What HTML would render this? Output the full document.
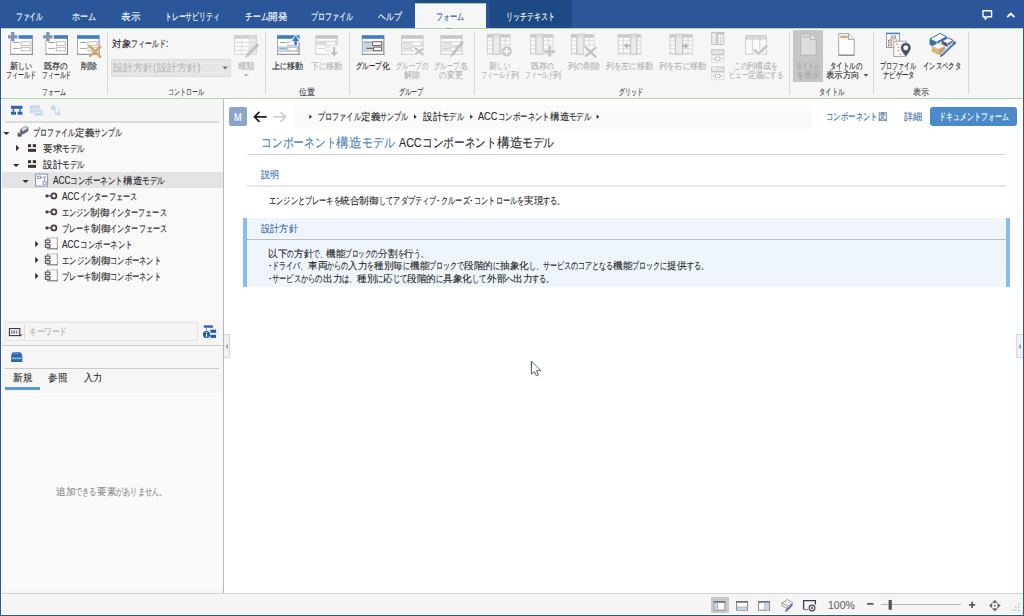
<!DOCTYPE html>
<html lang="ja"><head><meta charset="utf-8"><title>Next Design</title>
<style>
html,body{margin:0;padding:0;}
body{width:1024px;height:616px;overflow:hidden;position:relative;background:#fff;font-family:"Liberation Sans",sans-serif;font-size:9.6px;color:#262626;}
.b{position:absolute;}
.t{position:absolute;-webkit-text-stroke:0.12px currentColor;white-space:nowrap;transform-origin:0 50%;display:block;}
svg{position:absolute;overflow:visible;}
</style></head><body>
<!-- window frame + top bar -->
<div class="b" style="left:0;top:0;width:1024px;height:616px;background:#2b579a"></div>
<div class="b" style="left:1px;top:29px;width:1021.65px;height:585.8px;background:#fff"></div>
<!-- contextual tab shading -->
<div class="b" style="left:414.6px;top:0;width:74px;height:3.4px;background:#1f4b86"></div>
<div class="b" style="left:488.6px;top:0;width:83.6px;height:28px;background:#1d4a84"></div>
<div class="b" style="left:414.6px;top:3px;width:71.2px;height:26px;background:#f6f6f7;border-top:1px solid #9fd39c;box-sizing:border-box"></div>
<!-- ribbon body -->
<div class="b" style="left:2px;top:30px;width:1020.65px;height:68px;background:#f6f6f7"></div>
<div class="b" style="left:1px;top:28px;width:1021.65px;height:1px;background:#a9d7a5"></div>
<div class="b" style="left:446px;top:28px;width:6px;height:1px;background:#a79aa8"></div>
<div class="b" style="left:1px;top:98px;width:1021.65px;height:1px;background:#a9d7a5"></div>
<!-- left panel -->
<div class="b" style="left:2px;top:99px;width:221px;height:494px;background:#f6f6f6"></div>
<div class="b" style="left:2px;top:99px;width:221px;height:23px;background:#f5f5f5"></div>
<div class="b" style="left:2px;top:123px;width:221px;height:197px;background:#f9f9f9"></div>
<div class="b" style="left:223px;top:99px;width:1px;height:494px;background:#b9b9b9"></div>
<div class="b" style="left:5px;top:121.3px;width:214px;height:1.5px;background:#dadcdc"></div>
<div class="b" style="left:2px;top:172px;width:221px;height:16px;background:#e4e4e4"></div>
<div class="b" style="left:2px;top:320px;width:221px;height:25px;background:#f5f5f5"></div>
<div class="b" style="left:5px;top:322px;width:193px;height:19px;background:#f5f5f5;border:1px solid #e4e4e4;box-sizing:border-box"></div>
<div class="b" style="left:24px;top:324px;width:1px;height:15px;background:#dcdcdc"></div>
<div class="b" style="left:2px;top:345px;width:221px;height:1px;background:#cfcfcf"></div>
<div class="b" style="left:5px;top:368px;width:214px;height:1px;background:#cbcbcb"></div>
<div class="b" style="left:5px;top:387px;width:35px;height:3px;background:#5b9bd5"></div>
<div class="b" style="left:4px;top:392.5px;width:219px;height:197.5px;background:#fafafa"></div>
<!-- splitter handles -->
<div class="b" style="left:224px;top:334px;width:6px;height:24px;background:#eef2f4;border:1px solid #d6d6d6;border-left:none;box-sizing:border-box"></div>
<div class="b" style="left:1016px;top:334px;width:6.65px;height:24px;background:#eef2f4;border:1px solid #d6d6d6;border-right:none;box-sizing:border-box"></div>
<!-- main content -->
<div class="b" style="left:229px;top:107px;width:18px;height:19px;background:#8aa5c9;border-radius:2px"></div>
<div class="b" style="left:294px;top:105px;width:518px;height:24px;background:#fafafa;border-radius:4px"></div>
<div class="b" style="left:930px;top:107px;width:87px;height:19px;background:#4b8ac9;border-radius:3px"></div>
<div class="b" style="left:247px;top:154px;width:759px;height:1px;background:#d4d4d4"></div>
<div class="b" style="left:247px;top:185px;width:759px;height:2px;background:#e6e6e6"></div>
<div class="b" style="left:243px;top:218px;width:767px;height:69px;background:#eef6fb"></div>
<div class="b" style="left:243px;top:218px;width:4px;height:69px;background:#88bbf0"></div>
<div class="b" style="left:1006px;top:218px;width:4px;height:69px;background:#88bbf0"></div>
<div class="b" style="left:247px;top:239px;width:759px;height:1px;background:#bdbdbd"></div>
<!-- status bar -->
<div class="b" style="left:2px;top:593px;width:1020.65px;height:1px;background:#d2d2d2"></div>
<div class="b" style="left:2px;top:594px;width:1020.65px;height:19.8px;background:#f5f5f5"></div>
<div class="b" style="left:711px;top:597px;width:18px;height:16px;background:#c9c9c9"></div>
<!-- ribbon misc -->
<div class="b" style="left:111px;top:59px;width:120px;height:18px;background:#e6e6e6;border:1px solid #dcdcdc;box-sizing:border-box"></div>
<div class="b" style="left:793px;top:30px;width:30px;height:52px;background:#c6c6c6"></div>
<svg width="1024" height="616" viewBox="0 0 1024 616" style="left:0;top:0"><rect x="107" y="31.5" width="1" height="63" fill="#d7d7d7" /><rect x="265" y="31.5" width="1" height="63" fill="#d7d7d7" /><rect x="349" y="31.5" width="1" height="63" fill="#d7d7d7" /><rect x="474" y="31.5" width="1" height="63" fill="#d7d7d7" /><rect x="789" y="31.5" width="1" height="63" fill="#d7d7d7" /><rect x="873" y="31.5" width="1" height="63" fill="#d7d7d7" /><rect x="968" y="31.5" width="1" height="63" fill="#d7d7d7" /><rect x="10.2" y="35.2" width="22.6" height="19.6" fill="#ffffff" /><rect x="18.6" y="35.2" width="14.2" height="3.6" fill="#3f7dc0" /><line x1="10.7" y1="38.8" x2="10.7" y2="54.8" stroke="#a9a9ab" stroke-width="1" /><line x1="32.3" y1="38.8" x2="32.3" y2="54.8" stroke="#8a7e7c" stroke-width="1" /><line x1="10.2" y1="54.3" x2="32.8" y2="54.3" stroke="#857a7a" stroke-width="1" /><line x1="13.1" y1="42.5" x2="19.8" y2="42.5" stroke="#a7a2a0" stroke-width="1" /><line x1="13.1" y1="48.4" x2="19.8" y2="48.4" stroke="#a7a2a0" stroke-width="1" /><rect x="21.1" y="41.8" width="9.2" height="3.6" fill="#fff" stroke="#bcb8b6" stroke-width="0.9"/><rect x="21.1" y="47.3" width="9.2" height="3.5" fill="#fff" stroke="#bcb8b6" stroke-width="0.9"/><rect x="7.4" y="34.6" width="10.6" height="4.4" fill="#f6f6f7" /><rect x="10.4" y="31.4" width="4.6" height="10.6" fill="#f6f6f7" /><rect x="8" y="35.2" width="9.4" height="3.3" fill="#7e98b3" /><rect x="11" y="32" width="3.4" height="9.4" fill="#7e98b3" /><rect x="45.4" y="35.2" width="22.6" height="19.6" fill="#ffffff" /><rect x="53.8" y="35.2" width="14.2" height="3.6" fill="#3f7dc0" /><line x1="45.9" y1="38.8" x2="45.9" y2="54.8" stroke="#a9a9ab" stroke-width="1" /><line x1="67.5" y1="38.8" x2="67.5" y2="54.8" stroke="#8a7e7c" stroke-width="1" /><line x1="45.4" y1="54.3" x2="68" y2="54.3" stroke="#857a7a" stroke-width="1" /><line x1="48.3" y1="42.5" x2="55" y2="42.5" stroke="#a7a2a0" stroke-width="1" /><line x1="48.3" y1="48.4" x2="55" y2="48.4" stroke="#a7a2a0" stroke-width="1" /><rect x="56.3" y="41.8" width="9.2" height="3.6" fill="#fff" stroke="#bcb8b6" stroke-width="0.9"/><rect x="56.3" y="47.3" width="9.2" height="3.5" fill="#fff" stroke="#bcb8b6" stroke-width="0.9"/><rect x="42.6" y="34.6" width="10.6" height="4.4" fill="#f6f6f7" /><rect x="45.6" y="31.4" width="4.6" height="10.6" fill="#f6f6f7" /><rect x="43.2" y="35.2" width="9.4" height="3.3" fill="#7e98b3" /><rect x="46.2" y="32" width="3.4" height="9.4" fill="#7e98b3" /><rect x="77" y="35.2" width="22.6" height="19.6" fill="#ffffff" /><rect x="77" y="35.2" width="22.6" height="3.6" fill="#3f7dc0" /><line x1="77.5" y1="38.8" x2="77.5" y2="54.8" stroke="#a9a9ab" stroke-width="1" /><line x1="99.1" y1="38.8" x2="99.1" y2="54.8" stroke="#8a7e7c" stroke-width="1" /><line x1="77" y1="54.3" x2="99.6" y2="54.3" stroke="#857a7a" stroke-width="1" /><line x1="79.9" y1="42.5" x2="86.6" y2="42.5" stroke="#a7a2a0" stroke-width="1" /><line x1="79.9" y1="48.4" x2="86.6" y2="48.4" stroke="#a7a2a0" stroke-width="1" /><rect x="87.9" y="41.8" width="9.2" height="3.6" fill="#fff" stroke="#bcb8b6" stroke-width="0.9"/><rect x="87.9" y="47.3" width="9.2" height="3.5" fill="#fff" stroke="#bcb8b6" stroke-width="0.9"/><line x1="89.6" y1="46" x2="100.2" y2="56.8" stroke="#d3a96c" stroke-width="2.6" stroke-linecap="round"/><line x1="100.2" y1="47" x2="90.1" y2="55.8" stroke="#d3a96c" stroke-width="2.6" stroke-linecap="round"/><path d="M222.6,66.6 h5.2 l-2.6,3 z" fill="#6e6e6e" stroke="none" stroke-width="1" /><path d="M243.6,74 h5 l-2.5,2.8 z" fill="#b4b4b4" stroke="none" stroke-width="1" /><rect x="234.2" y="35.1" width="22.6" height="19.6" fill="#fbfbfb" /><rect x="249.4" y="38.6" width="7.4" height="16.1" fill="#e9e9e9" /><rect x="234.2" y="35.1" width="22.6" height="3.6" fill="#cfcfcf" /><rect x="249.6" y="35.9" width="6.2" height="2" fill="#dedede" /><line x1="234.2" y1="42.5" x2="256.8" y2="42.5" stroke="#d8d8d8" stroke-width="0.9" /><line x1="234.2" y1="46.4" x2="256.8" y2="46.4" stroke="#d8d8d8" stroke-width="0.9" /><line x1="234.2" y1="50.3" x2="256.8" y2="50.3" stroke="#d8d8d8" stroke-width="0.9" /><line x1="241.6" y1="38.7" x2="241.6" y2="54.7" stroke="#dcdcdc" stroke-width="0.9" /><line x1="249.2" y1="38.7" x2="249.2" y2="54.7" stroke="#dcdcdc" stroke-width="0.9" /><rect x="234.65" y="35.55" width="21.7" height="18.7" fill="none" stroke="#d0d0d0" stroke-width="0.9"/><line x1="258" y1="44.4" x2="247.2" y2="55.4" stroke="#c2c2c2" stroke-width="3.2" /><path d="M246.2,54 l2.4,2.4 l-3.6,1.4 z" fill="#c9c9c9" stroke="none" stroke-width="1" /><rect x="277" y="35.2" width="22.6" height="19.6" fill="#ffffff" /><rect x="277.6" y="46.2" width="21.4" height="5.8" fill="#b7d9f1" /><rect x="277" y="35.2" width="22.6" height="3.6" fill="#3f7dc0" /><line x1="277.5" y1="38.8" x2="277.5" y2="54.8" stroke="#a9a9ab" stroke-width="1" /><line x1="299.1" y1="38.8" x2="299.1" y2="54.8" stroke="#8a7e7c" stroke-width="1" /><line x1="277" y1="54.3" x2="299.6" y2="54.3" stroke="#857a7a" stroke-width="1" /><line x1="279.9" y1="42.5" x2="286.6" y2="42.5" stroke="#a7a2a0" stroke-width="1" /><line x1="279.9" y1="48.4" x2="286.6" y2="48.4" stroke="#a7a2a0" stroke-width="1" /><rect x="287.9" y="41.8" width="9.2" height="3.6" fill="#fff" stroke="#bcb8b6" stroke-width="0.9"/><rect x="287.9" y="47.3" width="9.2" height="3.5" fill="#fff" stroke="#bcb8b6" stroke-width="0.9"/><path d="M295.6,34.4 l4.6,6.2 v1.2 h-2.6 v4 h-4 v-4 h-2.6 v-1.2 z" fill="#ffffff" stroke="none" stroke-width="1" /><path d="M295.6,35.4 l3.6,5.6 h-2.3 v4.4 h-2.6 v-4.4 h-2.3 z" fill="#3f7dc0" stroke="none" stroke-width="1" /><rect x="315.2" y="35.2" width="22.6" height="19.6" fill="#fbfbfb" /><rect x="315.8" y="40.6" width="21.4" height="4.9" fill="#e2e2e2" /><rect x="315.2" y="35.2" width="22.6" height="3.6" fill="#c6c6c6" /><line x1="315.7" y1="38.8" x2="315.7" y2="54.8" stroke="#d2d2d2" stroke-width="1" /><line x1="337.3" y1="38.8" x2="337.3" y2="54.8" stroke="#cecece" stroke-width="1" /><line x1="315.2" y1="54.3" x2="337.8" y2="54.3" stroke="#cbcbcb" stroke-width="1" /><line x1="318.1" y1="42.5" x2="324.8" y2="42.5" stroke="#d0d0d0" stroke-width="1" /><line x1="318.1" y1="48.4" x2="324.8" y2="48.4" stroke="#d0d0d0" stroke-width="1" /><rect x="326.1" y="41.8" width="9.2" height="3.6" fill="#fdfdfd" stroke="#d6d6d6" stroke-width="0.9"/><rect x="326.1" y="47.3" width="9.2" height="3.5" fill="#fdfdfd" stroke="#d6d6d6" stroke-width="0.9"/><rect x="330" y="45.6" width="8.4" height="11" fill="#f6f6f7" /><path d="M333,47 h2.2 v5 h2.8 l-3.9,4.6 l-3.9,-4.6 h2.8 z" fill="#c1c1c1" stroke="none" stroke-width="1" /><rect x="361.8" y="35.2" width="22.6" height="19.6" fill="#ffffff" /><rect x="362.4" y="41" width="21.4" height="10.9" fill="#c4d5e6" /><rect x="361.8" y="35.2" width="22.6" height="3.6" fill="#3f7dc0" /><line x1="362.3" y1="38.8" x2="362.3" y2="54.8" stroke="#a9a9ab" stroke-width="1" /><line x1="383.9" y1="38.8" x2="383.9" y2="54.8" stroke="#8a7e7c" stroke-width="1" /><line x1="361.8" y1="54.3" x2="384.4" y2="54.3" stroke="#857a7a" stroke-width="1" /><line x1="364.2" y1="42.4" x2="370.8" y2="42.4" stroke="#a39690" stroke-width="1" /><line x1="366.4" y1="48.3" x2="373.2" y2="48.3" stroke="#6d5750" stroke-width="1" /><rect x="372.4" y="41.8" width="9.2" height="3.6" fill="#fff" stroke="#6f5a52" stroke-width="0.9"/><rect x="373.6" y="47.2" width="8" height="3.5" fill="#fff" stroke="#6f5a52" stroke-width="0.9"/><rect x="401" y="35.2" width="22.6" height="19.6" fill="#fbfbfb" /><rect x="401.6" y="41" width="21.4" height="10.9" fill="#e5e5e5" /><rect x="401" y="35.2" width="22.6" height="3.6" fill="#c6c6c6" /><line x1="401.5" y1="38.8" x2="401.5" y2="54.8" stroke="#d2d2d2" stroke-width="1" /><line x1="423.1" y1="38.8" x2="423.1" y2="54.8" stroke="#cecece" stroke-width="1" /><line x1="401" y1="54.3" x2="423.6" y2="54.3" stroke="#cbcbcb" stroke-width="1" /><line x1="403.9" y1="42.5" x2="410.6" y2="42.5" stroke="#d0d0d0" stroke-width="1" /><line x1="403.9" y1="48.4" x2="410.6" y2="48.4" stroke="#d0d0d0" stroke-width="1" /><rect x="411.9" y="41.8" width="9.2" height="3.6" fill="#fdfdfd" stroke="#d6d6d6" stroke-width="0.9"/><rect x="411.9" y="47.3" width="9.2" height="3.5" fill="#fdfdfd" stroke="#d6d6d6" stroke-width="0.9"/><rect x="414" y="47" width="9.4" height="8.2" fill="#f6f6f7" /><line x1="415.4" y1="48.2" x2="422.6" y2="54.6" stroke="#c2c2c2" stroke-width="2" stroke-linecap="round"/><line x1="422.6" y1="49.2" x2="415.9" y2="53.6" stroke="#c2c2c2" stroke-width="2" stroke-linecap="round"/><rect x="440.2" y="35.2" width="22.6" height="19.6" fill="#fbfbfb" /><rect x="440.8" y="41" width="21.4" height="10.9" fill="#e5e5e5" /><rect x="440.2" y="35.2" width="22.6" height="3.6" fill="#c6c6c6" /><line x1="440.7" y1="38.8" x2="440.7" y2="54.8" stroke="#d2d2d2" stroke-width="1" /><line x1="462.3" y1="38.8" x2="462.3" y2="54.8" stroke="#cecece" stroke-width="1" /><line x1="440.2" y1="54.3" x2="462.8" y2="54.3" stroke="#cbcbcb" stroke-width="1" /><line x1="443.1" y1="42.5" x2="449.8" y2="42.5" stroke="#d0d0d0" stroke-width="1" /><line x1="443.1" y1="48.4" x2="449.8" y2="48.4" stroke="#d0d0d0" stroke-width="1" /><rect x="451.1" y="41.8" width="9.2" height="3.6" fill="#fdfdfd" stroke="#d6d6d6" stroke-width="0.9"/><rect x="451.1" y="47.3" width="9.2" height="3.5" fill="#fdfdfd" stroke="#d6d6d6" stroke-width="0.9"/><line x1="462.8" y1="41.8" x2="452.4" y2="54.6" stroke="#c2c2c2" stroke-width="3" /><path d="M451.2,53.4 l2.4,2 l-3.8,2 z" fill="#c6c6c6" stroke="none" stroke-width="1" /><rect x="487" y="34.2" width="23.4" height="20.3" fill="#fafafa" /><rect x="487" y="39.8" width="23.4" height="1.7" fill="#e6e6e6" /><rect x="487" y="43.9" width="23.4" height="1.7" fill="#e6e6e6" /><rect x="487" y="48" width="23.4" height="1.7" fill="#e6e6e6" /><rect x="487" y="52.1" width="23.4" height="1.7" fill="#e6e6e6" /><rect x="487" y="34.2" width="23.4" height="3.5" fill="#c9c9c9" /><line x1="492.6" y1="34.2" x2="492.6" y2="54.5" stroke="#d6d6d6" stroke-width="0.9" /><line x1="500.3" y1="34.2" x2="500.3" y2="54.5" stroke="#d6d6d6" stroke-width="0.9" /><line x1="505.4" y1="34.2" x2="505.4" y2="54.5" stroke="#d6d6d6" stroke-width="0.9" /><rect x="493" y="34.2" width="6.9" height="20.3" fill="#ebebeb" stroke="#c3c3c3" stroke-width="0.9"/><rect x="493.5" y="34.6" width="5.9" height="3" fill="#dedede" /><line x1="487.4" y1="34.2" x2="487.4" y2="54.5" stroke="#cdcdcd" stroke-width="0.9" /><line x1="510" y1="34.2" x2="510" y2="54.5" stroke="#d8d8d8" stroke-width="0.9" /><line x1="487" y1="54.1" x2="510.4" y2="54.1" stroke="#d0d0d0" stroke-width="0.9" /><circle cx="506.6" cy="51.4" r="5.9" fill="#f5f6f7"/><circle cx="506.6" cy="51.4" r="5.2" fill="#c8c8c8"/><rect x="503.4" y="50.6" width="6.4" height="1.7" fill="#fff" /><rect x="505.8" y="48.2" width="1.7" height="6.4" fill="#fff" /><rect x="530" y="34.2" width="23.4" height="20.3" fill="#fafafa" /><rect x="530" y="39.8" width="23.4" height="1.7" fill="#e6e6e6" /><rect x="530" y="43.9" width="23.4" height="1.7" fill="#e6e6e6" /><rect x="530" y="48" width="23.4" height="1.7" fill="#e6e6e6" /><rect x="530" y="52.1" width="23.4" height="1.7" fill="#e6e6e6" /><rect x="530" y="34.2" width="23.4" height="3.5" fill="#c9c9c9" /><line x1="535.6" y1="34.2" x2="535.6" y2="54.5" stroke="#d6d6d6" stroke-width="0.9" /><line x1="543.3" y1="34.2" x2="543.3" y2="54.5" stroke="#d6d6d6" stroke-width="0.9" /><line x1="548.4" y1="34.2" x2="548.4" y2="54.5" stroke="#d6d6d6" stroke-width="0.9" /><rect x="536" y="34.2" width="6.9" height="20.3" fill="#ebebeb" stroke="#c3c3c3" stroke-width="0.9"/><rect x="536.5" y="34.6" width="5.9" height="3" fill="#dedede" /><line x1="530.4" y1="34.2" x2="530.4" y2="54.5" stroke="#cdcdcd" stroke-width="0.9" /><line x1="553" y1="34.2" x2="553" y2="54.5" stroke="#d8d8d8" stroke-width="0.9" /><line x1="530" y1="54.1" x2="553.4" y2="54.1" stroke="#d0d0d0" stroke-width="0.9" /><rect x="543.6" y="49.4" width="12" height="4.4" fill="#f6f6f7" /><rect x="547.6" y="45.4" width="4.2" height="11.8" fill="#f6f6f7" /><rect x="544.3" y="50.1" width="10.6" height="3" fill="#c5c5c5" /><rect x="548.2" y="46" width="2.9" height="10.7" fill="#c5c5c5" /><rect x="571" y="34.2" width="23.4" height="20.3" fill="#fafafa" /><rect x="571" y="39.8" width="23.4" height="1.7" fill="#e6e6e6" /><rect x="571" y="43.9" width="23.4" height="1.7" fill="#e6e6e6" /><rect x="571" y="48" width="23.4" height="1.7" fill="#e6e6e6" /><rect x="571" y="52.1" width="23.4" height="1.7" fill="#e6e6e6" /><rect x="571" y="34.2" width="23.4" height="3.5" fill="#c9c9c9" /><line x1="576.6" y1="34.2" x2="576.6" y2="54.5" stroke="#d6d6d6" stroke-width="0.9" /><line x1="584.3" y1="34.2" x2="584.3" y2="54.5" stroke="#d6d6d6" stroke-width="0.9" /><line x1="589.4" y1="34.2" x2="589.4" y2="54.5" stroke="#d6d6d6" stroke-width="0.9" /><rect x="577" y="34.2" width="6.9" height="20.3" fill="#ebebeb" stroke="#c3c3c3" stroke-width="0.9"/><rect x="577.5" y="34.6" width="5.9" height="3" fill="#dedede" /><line x1="571.4" y1="34.2" x2="571.4" y2="54.5" stroke="#cdcdcd" stroke-width="0.9" /><line x1="594" y1="34.2" x2="594" y2="54.5" stroke="#d8d8d8" stroke-width="0.9" /><line x1="571" y1="54.1" x2="594.4" y2="54.1" stroke="#d0d0d0" stroke-width="0.9" /><rect x="584" y="46.4" width="11" height="8.2" fill="#f6f6f7" /><line x1="585.4" y1="47" x2="595.4" y2="56.8" stroke="#c1c1c1" stroke-width="2.2" stroke-linecap="round"/><line x1="595.4" y1="48" x2="585.9" y2="55.8" stroke="#c1c1c1" stroke-width="2.2" stroke-linecap="round"/><rect x="617.8" y="34.2" width="23.4" height="20.3" fill="#fafafa" /><rect x="617.8" y="39.8" width="23.4" height="1.7" fill="#e6e6e6" /><rect x="617.8" y="43.9" width="23.4" height="1.7" fill="#e6e6e6" /><rect x="617.8" y="48" width="23.4" height="1.7" fill="#e6e6e6" /><rect x="617.8" y="52.1" width="23.4" height="1.7" fill="#e6e6e6" /><rect x="617.8" y="34.2" width="23.4" height="3.5" fill="#c9c9c9" /><line x1="623.4" y1="34.2" x2="623.4" y2="54.5" stroke="#d6d6d6" stroke-width="0.9" /><line x1="630.4" y1="34.2" x2="630.4" y2="54.5" stroke="#d6d6d6" stroke-width="0.9" /><line x1="637" y1="34.2" x2="637" y2="54.5" stroke="#d6d6d6" stroke-width="0.9" /><rect x="630.8" y="34.2" width="5.8" height="20.3" fill="#ebebeb" stroke="#c3c3c3" stroke-width="0.9"/><rect x="631.3" y="34.6" width="4.8" height="3" fill="#dedede" /><line x1="618.2" y1="34.2" x2="618.2" y2="54.5" stroke="#cdcdcd" stroke-width="0.9" /><line x1="640.8" y1="34.2" x2="640.8" y2="54.5" stroke="#d8d8d8" stroke-width="0.9" /><line x1="617.8" y1="54.1" x2="641.2" y2="54.1" stroke="#d0d0d0" stroke-width="0.9" /><path d="M623.8,45.8 l3.4,-3.2 v2.2 h3 v2 h-3 v2.2 z" fill="#b4b4bb" stroke="none" stroke-width="1" /><rect x="669.6" y="34.2" width="23.4" height="20.3" fill="#fafafa" /><rect x="669.6" y="39.8" width="23.4" height="1.7" fill="#e6e6e6" /><rect x="669.6" y="43.9" width="23.4" height="1.7" fill="#e6e6e6" /><rect x="669.6" y="48" width="23.4" height="1.7" fill="#e6e6e6" /><rect x="669.6" y="52.1" width="23.4" height="1.7" fill="#e6e6e6" /><rect x="669.6" y="34.2" width="23.4" height="3.5" fill="#c9c9c9" /><line x1="675.2" y1="34.2" x2="675.2" y2="54.5" stroke="#d6d6d6" stroke-width="0.9" /><line x1="682.9" y1="34.2" x2="682.9" y2="54.5" stroke="#d6d6d6" stroke-width="0.9" /><line x1="688" y1="34.2" x2="688" y2="54.5" stroke="#d6d6d6" stroke-width="0.9" /><rect x="675.6" y="34.2" width="6.9" height="20.3" fill="#ebebeb" stroke="#c3c3c3" stroke-width="0.9"/><rect x="676.1" y="34.6" width="5.9" height="3" fill="#dedede" /><line x1="670" y1="34.2" x2="670" y2="54.5" stroke="#cdcdcd" stroke-width="0.9" /><line x1="692.6" y1="34.2" x2="692.6" y2="54.5" stroke="#d8d8d8" stroke-width="0.9" /><line x1="669.6" y1="54.1" x2="693" y2="54.1" stroke="#d0d0d0" stroke-width="0.9" /><path d="M688.4,46 l-3.4,-3.2 v2.2 h-3 v2 h3 v2.2 z" fill="#b4b4bb" stroke="none" stroke-width="1" /><rect x="711.7" y="32.4" width="4.6" height="12.2" fill="#ececec" stroke="#bdbdbd" stroke-width="0.9"/><rect x="717.6" y="32.4" width="6.2" height="12.2" fill="#f4f4f4" stroke="#bdbdbd" stroke-width="0.9"/><rect x="717.6" y="32.4" width="6.2" height="2.2" fill="#c4c4c4" /><line x1="720.7" y1="34.6" x2="720.7" y2="44.6" stroke="#d0d0d0" stroke-width="0.8" /><line x1="717.6" y1="38" x2="723.8" y2="38" stroke="#d0d0d0" stroke-width="0.8" /><line x1="717.6" y1="41.2" x2="723.8" y2="41.2" stroke="#d0d0d0" stroke-width="0.8" /><rect x="711.7" y="49.8" width="12.2" height="4.4" fill="#e6e6e6" stroke="#bdbdbd" stroke-width="0.9"/><rect x="711.7" y="55.2" width="12.2" height="7.2" fill="none" stroke="#bdbdbd" stroke-width="0.8" stroke-dasharray="1.2 1.2"/><rect x="715.6" y="57" width="4.2" height="3.4" fill="#fafafa" stroke="#bdbdbd" stroke-width="0.8"/><line x1="712.6" y1="58.7" x2="715.4" y2="58.7" stroke="#bdbdbd" stroke-width="0.9" /><line x1="720" y1="58.7" x2="723" y2="58.7" stroke="#bdbdbd" stroke-width="0.9" /><rect x="711.7" y="67" width="12.2" height="4.4" fill="#e6e6e6" stroke="#bdbdbd" stroke-width="0.9"/><rect x="711.7" y="72.4" width="12.2" height="7.2" fill="none" stroke="#bdbdbd" stroke-width="0.8" stroke-dasharray="1.2 1.2"/><rect x="715.6" y="74.2" width="4.2" height="3.4" fill="#fafafa" stroke="#bdbdbd" stroke-width="0.8"/><line x1="712.6" y1="75.9" x2="715.4" y2="75.9" stroke="#bdbdbd" stroke-width="0.9" /><line x1="720" y1="75.9" x2="723" y2="75.9" stroke="#bdbdbd" stroke-width="0.9" /><rect x="712.4" y="67.6" width="3.4" height="1.6" fill="#fafafa" /><rect x="745.2" y="35.3" width="21.8" height="19.2" fill="#fafafa" /><rect x="745.2" y="35.3" width="21.8" height="3.6" fill="#dcdcdc" /><rect x="745.65" y="35.75" width="20.9" height="18.3" fill="none" stroke="#c8c8c8" stroke-width="0.9"/><line x1="745.2" y1="39.1" x2="767" y2="39.1" stroke="#cccccc" stroke-width="0.9" /><line x1="752.4" y1="35.3" x2="752.4" y2="54.5" stroke="#cccccc" stroke-width="0.9" /><line x1="759.8" y1="35.3" x2="759.8" y2="54.5" stroke="#cccccc" stroke-width="0.9" /><path d="M753.6,49.4 l4.6,4.4 l9.4,-8.6" fill="none" stroke="#f6f6f7" stroke-width="4.4" /><path d="M754,49.6 l4.3,4 l9,-8.2" fill="none" stroke="#c5c5c5" stroke-width="2.6" /><path d="M800.7,33.7 H810.5 L816.2,39.400000000000006 V55.2 H800.7 Z" fill="#dcdcdc" stroke="#b4b4bd" stroke-width="1" /><path d="M810.5,33.7 V39.400000000000006 H816.2" fill="#e6e6e6" stroke="#b4b4bd" stroke-width="1" /><rect x="802.2" y="35.6" width="7.6" height="2.5" fill="#c9c9c9" /><path d="M838.7,33.7 H848.5 L854.2,39.400000000000006 V55.2 H838.7 Z" fill="#ffffff" stroke="#a3a3aa" stroke-width="1" /><path d="M848.5,33.7 V39.400000000000006 H854.2" fill="#f4f4f4" stroke="#a3a3aa" stroke-width="1" /><line x1="838.7" y1="55.2" x2="854.2" y2="55.2" stroke="#8c756c" stroke-width="1" /><rect x="840.2" y="35.6" width="7.6" height="2.5" fill="#d9ae74" /><path d="M863.6,74 h4.8 l-2.4,2.8 z" fill="#555" stroke="none" stroke-width="1" /><rect x="886.6" y="33.2" width="13" height="14.4" fill="#fff" stroke="#8e8e92" stroke-width="0.9"/><rect x="886.2" y="32.8" width="13.8" height="1.4" fill="#3f7dc0" /><rect x="891.2" y="36" width="4.4" height="2" fill="#fff" stroke="#8d817b" stroke-width="0.8"/><rect x="888.4" y="40.2" width="3.4" height="2" fill="#fff" stroke="#8d817b" stroke-width="0.8"/><rect x="888.4" y="44" width="3.4" height="2" fill="#fff" stroke="#8d817b" stroke-width="0.8"/><path d="M893.4,38 v1 h-3.2 v1.2 M893.4,39 h3.4 v2" fill="none" stroke="#9a9a9a" stroke-width="0.7" /><rect x="893.8" y="41.2" width="12.6" height="15.2" fill="#fff" stroke="#9a9a9e" stroke-width="0.9"/><line x1="893.4" y1="41.6" x2="906.8" y2="41.6" stroke="#bdbdbd" stroke-width="1.2" /><rect x="896.2" y="43.4" width="1.6" height="1.6" fill="#dba353" /><rect x="897.6" y="46.6" width="1.6" height="1.6" fill="#dba353" /><rect x="897.6" y="49.8" width="1.6" height="1.6" fill="#dba353" /><rect x="899.4" y="53.6" width="1.6" height="1.6" fill="#dba353" /><line x1="898.6" y1="44.2" x2="901.6" y2="44.2" stroke="#c9c9c9" stroke-width="0.7" /><line x1="900" y1="47.4" x2="903" y2="47.4" stroke="#c9c9c9" stroke-width="0.7" /><line x1="900" y1="50.6" x2="903" y2="50.6" stroke="#c9c9c9" stroke-width="0.7" /><line x1="901.8" y1="54.4" x2="904.8" y2="54.4" stroke="#c9c9c9" stroke-width="0.7" /><path d="M905.8,57 C903.6,53.4 900.6,51 900.6,47.8 A5.2,5.2 0 1 1 911,47.8 C911,51 908,53.4 905.8,57 Z" fill="#4b4a5c" stroke="#f6f6f7" stroke-width="0.6" /><circle cx="905.8" cy="47.8" r="3.1" fill="#3f6fae"/><circle cx="905.8" cy="47.8" r="2.4" fill="#ffffff"/><path d="M930,39 L940,33.4 L946.6,36.7 L936.5,42.3 Z" fill="#ffffff" stroke="#2f6db6" stroke-width="1" /><path d="M929.6,39 L936.5,42.5 V45.2 L933,46.8 L929.6,44.6 Z" fill="#2f6db6" stroke="none" stroke-width="1" /><path d="M936.5,42.4 L946.6,36.8 V38.4 L938.6,43 Z" fill="#2f6db6" stroke="none" stroke-width="1" /><path d="M942,41.2 L948,37.8 L953.2,40.4 L947.6,43.8 Z" fill="#ffffff" stroke="#4b5283" stroke-width="0.9" /><path d="M941.6,41.2 L947.6,44 V47 L944.8,45.8 L941.6,43.6 Z" fill="#4b5283" stroke="none" stroke-width="1" /><path d="M947.6,44 L953.2,40.6 V42.4 L949,45.6 Z" fill="#6a70a0" stroke="none" stroke-width="1" /><path d="M932,46.2 L938.8,43 L944.9,46.2 L938.4,49.5 Z" fill="#ffffff" stroke="#dbb372" stroke-width="0.8" /><path d="M931.8,46.4 L938.4,49.7 V55 L931.8,51.6 Z" fill="#dbb372" stroke="none" stroke-width="1" /><path d="M938.4,49.7 L945,46.4 V51.2 L938.4,55 Z" fill="#c99f5c" stroke="none" stroke-width="1" /><line x1="954.6" y1="42.6" x2="942.4" y2="54.6" stroke="#ffffff" stroke-width="4" /><line x1="954.6" y1="42.6" x2="942.4" y2="54.6" stroke="#2f6db6" stroke-width="2.6" /><line x1="954.2" y1="42.4" x2="942" y2="54.4" stroke="#cfe0f2" stroke-width="0.9" /><path d="M941.2,53.4 l2.2,2.2 l-3.8,1.6 z" fill="#2f6db6" stroke="none" stroke-width="1" /><circle cx="954.4" cy="42.8" r="1.6" fill="#2f6db6"/><path d="M983,10.8 h8.6 v6 h-4.4 l-2,2.4 v-2.4 h-2.2 z" fill="none" stroke="#ffffff" stroke-width="1.4" stroke-linejoin="round"/><path d="M1007.2,17.2 l3.6,-3.6 l3.6,3.6" fill="none" stroke="#ffffff" stroke-width="1.8" /><rect x="11" y="105.8" width="11.4" height="3" fill="#2e64a6" /><rect x="11" y="111.7" width="5" height="3" fill="#2e64a6" /><rect x="17.5" y="111.7" width="4.9" height="3" fill="#2e64a6" /><rect x="12.7" y="108.8" width="1.4" height="2.9" fill="#2e64a6" /><rect x="19.3" y="108.8" width="1.4" height="2.9" fill="#2e64a6" /><rect x="29.7" y="105.2" width="10.2" height="8.2" fill="#c6dcea" /><rect x="33.6" y="109.2" width="9.6" height="6.6" fill="#f5f5f5" /><rect x="34.2" y="109.8" width="8.6" height="5.8" fill="#c6dcea" /><rect x="35.6" y="111.6" width="5.8" height="1.2" fill="#e6f0f6" /><path d="M53.4,104.6 l3.4,3.2 l-3.4,3.2 l-3.4,-3.2 z" fill="#c6dcea" stroke="none" stroke-width="1" /><path d="M58.6,111.2 l2.6,2.5 l-2.6,2.5 l-2.6,-2.5 z" fill="#c6dcea" stroke="none" stroke-width="1" /><path d="M55.4,109.4 v4.4 h2" fill="none" stroke="#c6dcea" stroke-width="1.2" /><path d="M58.4,108.4 l2.2,1.6 l-2.2,1.6 z" fill="#c6dcea" stroke="none" stroke-width="1" /><path d="M3.2,131.9 h6.4 l-3.2,3.1 z" fill="#3b2f30" stroke="none" stroke-width="1" /><path d="M20.4,129.4 l5.4,-3 l2.6,1.6 l-5.4,3.2 z" fill="#e2e2ea" stroke="#65657c" stroke-width="0.7" /><path d="M20.2,129.6 l2.8,1.8 v3.2 l-2.8,-1.8 z" fill="#5b5b73" stroke="none" stroke-width="1" /><path d="M23,131.4 l5.4,-3.2 v3 l-5.4,3.4 z" fill="#6d6d86" stroke="none" stroke-width="1" /><rect x="17.6" y="132.6" width="4.2" height="4" fill="#56566c" /><rect x="18.4" y="133.4" width="2.6" height="0.8" fill="#9a9ab0" /><path d="M16.0,144.8 l3.3,3.2 l-3.3,3.2 z" fill="#3b2f30" stroke="none" stroke-width="1" /><rect x="28" y="144.2" width="3.1" height="3" fill="#3a2f31" /><rect x="32.8" y="144.2" width="3.2" height="3" fill="#3a2f31" /><rect x="28" y="148.9" width="8" height="2.9" fill="#3a2f31" /><path d="M12.900000000000002,164.0 h6.4 l-3.2,3.1 z" fill="#3b2f30" stroke="none" stroke-width="1" /><rect x="28" y="160.2" width="3.1" height="3" fill="#3a2f31" /><rect x="32.8" y="160.2" width="3.2" height="3" fill="#3a2f31" /><rect x="28" y="164.9" width="8" height="2.9" fill="#3a2f31" /><path d="M22.400000000000002,180.0 h6.4 l-3.2,3.1 z" fill="#3b2f30" stroke="none" stroke-width="1" /><rect x="35.6" y="174.1" width="12" height="12" fill="#ffffff" stroke="#7e93b8" stroke-width="1"/><rect x="37.6" y="176.2" width="3.2" height="2.4" fill="#fff" stroke="#6f83aa" stroke-width="0.8"/><rect x="43" y="181.8" width="3.2" height="2.4" fill="#fff" stroke="#6f83aa" stroke-width="0.8"/><circle cx="44.6" cy="177.4" r="1.1" fill="#fff" stroke="#6f83aa" stroke-width="0.8"/><line x1="44.6" y1="178.6" x2="44.6" y2="181.8" stroke="#6f83aa" stroke-width="0.8" /><line x1="40.8" y1="177.4" x2="43.4" y2="177.4" stroke="#8fa0c0" stroke-width="0.7" /><circle cx="46.9" cy="195.9" r="1.55" fill="#4a393a"/><line x1="47.6" y1="195.9" x2="51.2" y2="195.9" stroke="#4a393a" stroke-width="1.1" /><circle cx="53.900000000000006" cy="195.9" r="2.5" fill="#fff" stroke="#4a393a" stroke-width="1.7"/><circle cx="46.9" cy="211.9" r="1.55" fill="#4a393a"/><line x1="47.6" y1="211.9" x2="51.2" y2="211.9" stroke="#4a393a" stroke-width="1.1" /><circle cx="53.900000000000006" cy="211.9" r="2.5" fill="#fff" stroke="#4a393a" stroke-width="1.7"/><circle cx="46.9" cy="227.9" r="1.55" fill="#4a393a"/><line x1="47.6" y1="227.9" x2="51.2" y2="227.9" stroke="#4a393a" stroke-width="1.1" /><circle cx="53.900000000000006" cy="227.9" r="2.5" fill="#fff" stroke="#4a393a" stroke-width="1.7"/><path d="M35.199999999999996,240.8 l3.3,3.2 l-3.3,3.2 z" fill="#3b2f30" stroke="none" stroke-width="1" /><rect x="47.4" y="237.6" width="10.3" height="11.6" fill="#ffffff" /><line x1="47.4" y1="238" x2="57.7" y2="238" stroke="#b4b4b8" stroke-width="0.9" /><line x1="57.3" y1="237.6" x2="57.3" y2="249.2" stroke="#8f8f96" stroke-width="0.9" /><line x1="47.4" y1="248.8" x2="57.7" y2="248.8" stroke="#5e5e6c" stroke-width="1" /><line x1="47.8" y1="237.6" x2="47.8" y2="240" stroke="#77778a" stroke-width="0.9" /><line x1="47.8" y1="242.6" x2="47.8" y2="244.6" stroke="#77778a" stroke-width="0.9" /><line x1="47.8" y1="247.4" x2="47.8" y2="249.2" stroke="#77778a" stroke-width="0.9" /><rect x="45.4" y="240.1" width="4.5" height="2.6" fill="#fff" stroke="#4c4c58" stroke-width="1.1"/><rect x="45.4" y="244.7" width="4.5" height="2.6" fill="#fff" stroke="#4c4c58" stroke-width="1.1"/><path d="M35.199999999999996,256.8 l3.3,3.2 l-3.3,3.2 z" fill="#3b2f30" stroke="none" stroke-width="1" /><rect x="47.4" y="253.6" width="10.3" height="11.6" fill="#ffffff" /><line x1="47.4" y1="254" x2="57.7" y2="254" stroke="#b4b4b8" stroke-width="0.9" /><line x1="57.3" y1="253.6" x2="57.3" y2="265.2" stroke="#8f8f96" stroke-width="0.9" /><line x1="47.4" y1="264.8" x2="57.7" y2="264.8" stroke="#5e5e6c" stroke-width="1" /><line x1="47.8" y1="253.6" x2="47.8" y2="256" stroke="#77778a" stroke-width="0.9" /><line x1="47.8" y1="258.6" x2="47.8" y2="260.6" stroke="#77778a" stroke-width="0.9" /><line x1="47.8" y1="263.4" x2="47.8" y2="265.2" stroke="#77778a" stroke-width="0.9" /><rect x="45.4" y="256.1" width="4.5" height="2.6" fill="#fff" stroke="#4c4c58" stroke-width="1.1"/><rect x="45.4" y="260.7" width="4.5" height="2.6" fill="#fff" stroke="#4c4c58" stroke-width="1.1"/><path d="M35.199999999999996,272.8 l3.3,3.2 l-3.3,3.2 z" fill="#3b2f30" stroke="none" stroke-width="1" /><rect x="47.4" y="269.6" width="10.3" height="11.6" fill="#ffffff" /><line x1="47.4" y1="270" x2="57.7" y2="270" stroke="#b4b4b8" stroke-width="0.9" /><line x1="57.3" y1="269.6" x2="57.3" y2="281.2" stroke="#8f8f96" stroke-width="0.9" /><line x1="47.4" y1="280.8" x2="57.7" y2="280.8" stroke="#5e5e6c" stroke-width="1" /><line x1="47.8" y1="269.6" x2="47.8" y2="272" stroke="#77778a" stroke-width="0.9" /><line x1="47.8" y1="274.6" x2="47.8" y2="276.6" stroke="#77778a" stroke-width="0.9" /><line x1="47.8" y1="279.4" x2="47.8" y2="281.2" stroke="#77778a" stroke-width="0.9" /><rect x="45.4" y="272.1" width="4.5" height="2.6" fill="#fff" stroke="#4c4c58" stroke-width="1.1"/><rect x="45.4" y="276.7" width="4.5" height="2.6" fill="#fff" stroke="#4c4c58" stroke-width="1.1"/><rect x="9.4" y="328.6" width="10.4" height="7" fill="#ffffff" stroke="#4a3132" stroke-width="1.1"/><rect x="10.8" y="330.4" width="1.8" height="3.4" fill="#7d86b0" /><rect x="13.3" y="330.4" width="1.8" height="3.4" fill="#7d86b0" /><rect x="15.8" y="330.4" width="1.2" height="3.4" fill="#7d86b0" /><rect x="17.6" y="330.4" width="0.8" height="3.4" fill="#9aa0c0" /><path d="M19.4,334.6 h2.6 l-1.3,2.2 z" fill="#4a3132" stroke="none" stroke-width="1" /><rect x="203.8" y="325.4" width="9.2" height="2.3" fill="#1f5db0" /><rect x="206" y="327.7" width="1" height="3" fill="#8a8a8a" /><circle cx="206.5" cy="334.5" r="3.6" fill="#1f5db0"/><rect x="206" y="333.6" width="1.1" height="3.2" fill="#fff" /><rect x="206" y="331.9" width="1.1" height="1" fill="#fff" /><rect x="210.4" y="329.7" width="5.7" height="3.1" fill="#1f5db0" /><rect x="210.4" y="334.8" width="5.7" height="3.1" fill="#1f5db0" /><path d="M11.1,356.8 q0.2,-4.6 2.8,-4.6 h5.6 q2.6,0 2.8,4.6 v5.2 h-11.2 z" fill="#2e67aa" stroke="none" stroke-width="1" /><rect x="13.8" y="353.3" width="5.8" height="0.8" fill="#6f9bcd" /><rect x="11.1" y="357.3" width="11.2" height="2" fill="#5f90c8" /><rect x="12.4" y="357.9" width="1.4" height="0.8" fill="#dbe8f5" /><rect x="14.8" y="357.9" width="1.4" height="0.8" fill="#dbe8f5" /><rect x="17.2" y="357.9" width="1.4" height="0.8" fill="#dbe8f5" /><rect x="19.6" y="357.9" width="1.4" height="0.8" fill="#dbe8f5" /><path d="M225.8,346.4 l2.2,-2.9 v5.8 z" fill="#9f9f9f" stroke="none" stroke-width="1" /><path d="M1018.5,346.4 l2.3,-2.9 v5.8 z" fill="#9f9f9f" stroke="none" stroke-width="1" /><path d="M266,116.8 H254.6 M259,112.3 L254.4,116.8 L259,121.4" fill="none" stroke="#1c1c28" stroke-width="1.7" stroke-linecap="round" stroke-linejoin="round"/><path d="M273.8,116.8 H285.4 M281,112.3 L285.6,116.8 L281,121.4" fill="none" stroke="#cfcfcf" stroke-width="1.7" stroke-linecap="round" stroke-linejoin="round"/><path d="M309.3,114.6 l2.7,2.2 l-2.7,2.2 z" fill="#2a2a2a" stroke="none" stroke-width="1" /><path d="M414,114.6 l2.7,2.2 l-2.7,2.2 z" fill="#2a2a2a" stroke="none" stroke-width="1" /><path d="M470.2,114.6 l2.7,2.2 l-2.7,2.2 z" fill="#2a2a2a" stroke="none" stroke-width="1" /><path d="M596.6,114.6 l2.7,2.2 l-2.7,2.2 z" fill="#2a2a2a" stroke="none" stroke-width="1" /><rect x="713.6" y="601" width="11.8" height="9.6" fill="#ffffff" /><rect x="713.6" y="601" width="11.8" height="1.8" fill="#7b7172" /><rect x="714.05" y="601.45" width="10.9" height="8.7" fill="none" stroke="#7b7172" stroke-width="0.9"/><rect x="714.5" y="602.8" width="2.7" height="6.9" fill="#b7daf2" /><line x1="717.5" y1="602.8" x2="717.5" y2="610" stroke="#a59d9d" stroke-width="0.8" /><rect x="736.2" y="601" width="11.8" height="9.6" fill="#ffffff" /><rect x="736.2" y="601" width="11.8" height="1.8" fill="#7b7172" /><rect x="736.65" y="601.45" width="10.9" height="8.7" fill="none" stroke="#7b7172" stroke-width="0.9"/><rect x="737.1" y="607.4" width="10" height="2.3" fill="#b7daf2" /><line x1="736.6" y1="607.1" x2="747.6" y2="607.1" stroke="#a59d9d" stroke-width="0.8" /><rect x="758.2" y="601" width="11.8" height="9.6" fill="#ffffff" /><rect x="758.2" y="601" width="11.8" height="1.8" fill="#7b7172" /><rect x="758.65" y="601.45" width="10.9" height="8.7" fill="none" stroke="#7b7172" stroke-width="0.9"/><rect x="765.2" y="602.8" width="4" height="6.9" fill="#b7daf2" /><line x1="764.8" y1="602.8" x2="764.8" y2="610" stroke="#a59d9d" stroke-width="0.8" /><path d="M782,603 l5.4,-3.4 l5.6,3.2 l-5.4,3.4 z" fill="#fdfdfd" stroke="#8f8f8f" stroke-width="0.9" /><path d="M782,603 v2.6 l5.6,3.4 v-2.8 M787.6,609 l2.4,-1.4" fill="none" stroke="#8f8f8f" stroke-width="0.9" /><path d="M787,601.4 l2.8,1.8 M785,602.4 l2.8,1.8" fill="none" stroke="#b5b5b5" stroke-width="0.7" /><line x1="792.4" y1="604.4" x2="786.6" y2="610.4" stroke="#5d6b9c" stroke-width="2" /><path d="M785.8,609.6 l1.6,1.6 l-2.6,1 z" fill="#7a7a7a" stroke="none" stroke-width="1" /><path d="M803.6,609.6 V600.7 H815.4 V604.6" fill="none" stroke="#3c3c5e" stroke-width="1.3" /><line x1="803.6" y1="609.6" x2="808" y2="609.6" stroke="#8a8a8a" stroke-width="1.2" /><circle cx="812" cy="608" r="2.9" fill="#f5f5f5" stroke="#4a4550" stroke-width="1.1"/><path d="M810.6,606.6 l2.8,2.8 M813.4,606.6 l-2.8,2.8" fill="none" stroke="#4a4550" stroke-width="0.9" /><rect x="867" y="603" width="6.6" height="1.7" fill="#5b5556" /><rect x="881" y="604" width="80" height="1" fill="#b5b5b5" /><rect x="888.6" y="600" width="3.2" height="9.8" fill="#5b5051" /><rect x="969" y="604.1" width="6.2" height="1.6" fill="#555053" /><rect x="971.3" y="601.7" width="1.6" height="6.4" fill="#555053" /><path d="M994.8,599.8 l2.8,3.2 h-5.6 z" fill="#6a6a6e" stroke="none" stroke-width="1" /><path d="M994.8,611.4 l2.8,-3.2 h-5.6 z" fill="#6a6a6e" stroke="none" stroke-width="1" /><path d="M989,605.6 l3.2,-2.8 v5.6 z" fill="#6a6a6e" stroke="none" stroke-width="1" /><path d="M1000.6,605.6 l-3.2,-2.8 v5.6 z" fill="#6a6a6e" stroke="none" stroke-width="1" /><rect x="994" y="604.8" width="1.6" height="1.6" fill="#6a6a6e" /><rect x="1018" y="603.4" width="1.6" height="1.6" fill="#c8c8c8" /><rect x="1015" y="606.4" width="1.6" height="1.6" fill="#c8c8c8" /><rect x="1018" y="606.4" width="1.6" height="1.6" fill="#c8c8c8" /><rect x="1012" y="609.4" width="1.6" height="1.6" fill="#c8c8c8" /><rect x="1015" y="609.4" width="1.6" height="1.6" fill="#c8c8c8" /><rect x="1018" y="609.4" width="1.6" height="1.6" fill="#c8c8c8" /><path d="M531.4,361.2 V374.2 L534.4,371.6 L536.4,375.8 L538.4,374.8 L536.6,370.8 L540.8,370.6 Z" fill="#ffffff" stroke="#4a4444" stroke-width="0.9" stroke-linejoin="round"/><line x1="531.8" y1="361.6" x2="540.6" y2="370.4" stroke="#a0a0a0" stroke-width="0.9" /><line x1="531.4" y1="361.4" x2="531.4" y2="368" stroke="#2c5aa0" stroke-width="1" /></svg>
<span class="g"><span class="t" style="left:16.20px;top:10.6px;font-size:9.6px;line-height:12px;color:#ffffff;transform:scaleX(0.6700);">ファイル</span></span>
<span class="g"><span class="t" style="left:72.00px;top:10.6px;font-size:9.6px;line-height:12px;color:#ffffff;transform:scaleX(0.8067);">ホーム</span></span>
<span class="g"><span class="t" style="left:120.70px;top:10.6px;font-size:9.6px;line-height:12px;color:#ffffff;transform:scaleX(0.9650);">表示</span></span>
<span class="g"><span class="t" style="left:165.00px;top:10.6px;font-size:9.6px;line-height:12px;color:#ffffff;transform:scaleX(0.6813);">トレーサビリティ</span></span>
<span class="g"><span class="t" style="left:245.00px;top:10.6px;font-size:9.6px;line-height:12px;color:#ffffff;transform:scaleX(0.7767);">チーム</span><span class="t" style="left:268.30px;top:10.6px;font-size:9.6px;line-height:12px;color:#ffffff;transform:scaleX(0.9600);">開発</span></span>
<span class="g"><span class="t" style="left:311.00px;top:10.6px;font-size:9.6px;line-height:12px;color:#ffffff;transform:scaleX(0.7000);">プロファイル</span></span>
<span class="g"><span class="t" style="left:377.50px;top:10.6px;font-size:9.6px;line-height:12px;color:#ffffff;transform:scaleX(0.7833);">ヘルプ</span></span>
<span class="g"><span class="t" style="left:435.60px;top:10.6px;font-size:9.6px;line-height:12px;color:#2b579a;transform:scaleX(0.7150);">フォーム</span></span>
<span class="g"><span class="t" style="left:506.00px;top:10.6px;font-size:9.6px;line-height:12px;color:#ffffff;transform:scaleX(0.7029);">リッチテキスト</span></span>
<span class="g"><span class="t" style="left:10.00px;top:59.8px;font-size:9.2px;line-height:12px;color:#262626;transform:scaleX(0.8996);">新</span><span class="t" style="left:18.10px;top:59.8px;font-size:9.2px;line-height:12px;color:#262626;transform:scaleX(0.7724);">しい</span></span>
<span class="g"><span class="t" style="left:6.20px;top:69.4px;font-size:9.2px;line-height:12px;color:#262626;transform:scaleX(0.6533);">フィールド</span></span>
<span class="g"><span class="t" style="left:43.70px;top:59.8px;font-size:9.2px;line-height:12px;color:#262626;transform:scaleX(0.8996);">既存</span><span class="t" style="left:59.89px;top:59.8px;font-size:9.2px;line-height:12px;color:#262626;transform:scaleX(0.8453);">の</span></span>
<span class="g"><span class="t" style="left:42.00px;top:69.4px;font-size:9.2px;line-height:12px;color:#262626;transform:scaleX(0.6489);">フィールド</span></span>
<span class="g"><span class="t" style="left:81.00px;top:59.8px;font-size:9.2px;line-height:12px;color:#262626;transform:scaleX(0.8889);">削除</span></span>
<span class="g"><span class="t" style="left:42.00px;top:86.2px;font-size:9.2px;line-height:12px;color:#444;transform:scaleX(0.6556);">フォーム</span></span>
<span class="g"><span class="t" style="left:112.00px;top:38.2px;font-size:9.6px;line-height:12px;color:#262626;transform:scaleX(0.9600);">対象</span><span class="t" style="left:131.20px;top:38.2px;font-size:9.6px;line-height:12px;color:#262626;transform:scaleX(0.6893);">フィールド</span><span class="t" style="left:165.67px;top:38.2px;font-size:10.08px;line-height:12px;color:#262626;transform:scaleX(0.8300);">:</span></span>
<span class="g"><span class="t" style="left:113.40px;top:62.2px;font-size:9.6px;line-height:12px;color:#b8b8b8;">設計方針</span><span class="t" style="left:153.31px;top:62.2px;font-size:10.08px;line-height:12px;color:#b8b8b8;transform:scaleX(1.0393);"> (</span><span class="t" style="left:156.80px;top:62.2px;font-size:9.6px;line-height:12px;color:#b8b8b8;">設計方針</span><span class="t" style="left:196.71px;top:62.2px;font-size:10.08px;line-height:12px;color:#b8b8b8;transform:scaleX(1.0393);">)</span></span>
<span class="g"><span class="t" style="left:168.00px;top:86.2px;font-size:9.2px;line-height:12px;color:#444;transform:scaleX(0.6667);">コントロール</span></span>
<span class="g"><span class="t" style="left:237.70px;top:59.8px;font-size:9.2px;line-height:12px;color:#b3b3b3;transform:scaleX(0.9389);">種類</span></span>
<span class="g"><span class="t" style="left:272.00px;top:59.8px;font-size:9.2px;line-height:12px;color:#262626;transform:scaleX(0.8996);">上</span><span class="t" style="left:280.10px;top:59.8px;font-size:9.2px;line-height:12px;color:#262626;transform:scaleX(0.7902);">に</span><span class="t" style="left:287.21px;top:59.8px;font-size:9.2px;line-height:12px;color:#262626;transform:scaleX(0.8996);">移動</span></span>
<span class="g"><span class="t" style="left:311.00px;top:59.8px;font-size:9.2px;line-height:12px;color:#b3b3b3;transform:scaleX(0.8996);">下</span><span class="t" style="left:319.10px;top:59.8px;font-size:9.2px;line-height:12px;color:#b3b3b3;transform:scaleX(0.7458);">に</span><span class="t" style="left:325.81px;top:59.8px;font-size:9.2px;line-height:12px;color:#b3b3b3;transform:scaleX(0.8996);">移動</span></span>
<span class="g"><span class="t" style="left:299.00px;top:86.2px;font-size:9.2px;line-height:12px;color:#444;transform:scaleX(0.8889);">位置</span></span>
<span class="g"><span class="t" style="left:356.00px;top:59.8px;font-size:9.2px;line-height:12px;color:#262626;transform:scaleX(0.7196);">グループ</span><span class="t" style="left:381.90px;top:59.8px;font-size:9.2px;line-height:12px;color:#262626;transform:scaleX(0.8996);">化</span></span>
<span class="g"><span class="t" style="left:396.00px;top:59.8px;font-size:9.2px;line-height:12px;color:#b3b3b3;transform:scaleX(0.7111);">グループの</span></span>
<span class="g"><span class="t" style="left:404.00px;top:69.4px;font-size:9.2px;line-height:12px;color:#b3b3b3;transform:scaleX(0.9000);">解除</span></span>
<span class="g"><span class="t" style="left:434.20px;top:59.8px;font-size:9.2px;line-height:12px;color:#b3b3b3;transform:scaleX(0.7140);">グループ</span><span class="t" style="left:459.90px;top:59.8px;font-size:9.2px;line-height:12px;color:#b3b3b3;transform:scaleX(0.8996);">名</span></span>
<span class="g"><span class="t" style="left:439.20px;top:69.4px;font-size:9.2px;line-height:12px;color:#b3b3b3;transform:scaleX(0.8231);">の</span><span class="t" style="left:446.61px;top:69.4px;font-size:9.2px;line-height:12px;color:#b3b3b3;transform:scaleX(0.8996);">変更</span></span>
<span class="g"><span class="t" style="left:399.00px;top:86.2px;font-size:9.2px;line-height:12px;color:#444;transform:scaleX(0.6778);">グループ</span></span>
<span class="g"><span class="t" style="left:489.00px;top:59.8px;font-size:9.2px;line-height:12px;color:#b3b3b3;transform:scaleX(0.8996);">新</span><span class="t" style="left:497.10px;top:59.8px;font-size:9.2px;line-height:12px;color:#b3b3b3;transform:scaleX(0.7280);">しい</span></span>
<span class="g"><span class="t" style="left:481.00px;top:69.4px;font-size:9.2px;line-height:12px;color:#b3b3b3;transform:scaleX(0.6645);">フィールド</span><span class="t" style="left:510.90px;top:69.4px;font-size:9.2px;line-height:12px;color:#b3b3b3;transform:scaleX(0.8996);">列</span></span>
<span class="g"><span class="t" style="left:531.00px;top:59.8px;font-size:9.2px;line-height:12px;color:#b3b3b3;transform:scaleX(0.8996);">既存</span><span class="t" style="left:547.19px;top:59.8px;font-size:9.2px;line-height:12px;color:#b3b3b3;transform:scaleX(0.7564);">の</span></span>
<span class="g"><span class="t" style="left:524.60px;top:69.4px;font-size:9.2px;line-height:12px;color:#b3b3b3;transform:scaleX(0.6401);">フィールド</span><span class="t" style="left:553.40px;top:69.4px;font-size:9.2px;line-height:12px;color:#b3b3b3;transform:scaleX(0.8996);">列</span></span>
<span class="g"><span class="t" style="left:568.00px;top:59.8px;font-size:9.2px;line-height:12px;color:#b3b3b3;transform:scaleX(0.8996);">列</span><span class="t" style="left:576.10px;top:59.8px;font-size:9.2px;line-height:12px;color:#b3b3b3;transform:scaleX(0.8569);">の</span><span class="t" style="left:583.81px;top:59.8px;font-size:9.2px;line-height:12px;color:#b3b3b3;transform:scaleX(0.8996);">削除</span></span>
<span class="g"><span class="t" style="left:605.60px;top:59.8px;font-size:9.2px;line-height:12px;color:#b3b3b3;transform:scaleX(0.8996);">列</span><span class="t" style="left:613.70px;top:59.8px;font-size:9.2px;line-height:12px;color:#b3b3b3;transform:scaleX(0.8342);">を</span><span class="t" style="left:621.20px;top:59.8px;font-size:9.2px;line-height:12px;color:#b3b3b3;transform:scaleX(0.8996);">左</span><span class="t" style="left:629.30px;top:59.8px;font-size:9.2px;line-height:12px;color:#b3b3b3;transform:scaleX(0.8342);">に</span><span class="t" style="left:636.81px;top:59.8px;font-size:9.2px;line-height:12px;color:#b3b3b3;transform:scaleX(0.8996);">移動</span></span>
<span class="g"><span class="t" style="left:659.00px;top:59.8px;font-size:9.2px;line-height:12px;color:#b3b3b3;transform:scaleX(0.8996);">列</span><span class="t" style="left:667.10px;top:59.8px;font-size:9.2px;line-height:12px;color:#b3b3b3;transform:scaleX(0.8120);">を</span><span class="t" style="left:674.40px;top:59.8px;font-size:9.2px;line-height:12px;color:#b3b3b3;transform:scaleX(0.8996);">右</span><span class="t" style="left:682.50px;top:59.8px;font-size:9.2px;line-height:12px;color:#b3b3b3;transform:scaleX(0.8120);">に</span><span class="t" style="left:689.81px;top:59.8px;font-size:9.2px;line-height:12px;color:#b3b3b3;transform:scaleX(0.8996);">移動</span></span>
<span class="g"><span class="t" style="left:619.40px;top:86.2px;font-size:9.2px;line-height:12px;color:#444;transform:scaleX(0.6556);">グリッド</span></span>
<span class="g"><span class="t" style="left:733.50px;top:59.8px;font-size:9.2px;line-height:12px;color:#b3b3b3;transform:scaleX(0.7486);">この</span><span class="t" style="left:746.97px;top:59.8px;font-size:9.2px;line-height:12px;color:#b3b3b3;transform:scaleX(0.8996);">列構成</span><span class="t" style="left:771.26px;top:59.8px;font-size:9.2px;line-height:12px;color:#b3b3b3;transform:scaleX(0.7486);">を</span></span>
<span class="g"><span class="t" style="left:729.00px;top:69.4px;font-size:9.2px;line-height:12px;color:#b3b3b3;transform:scaleX(0.7001);">ビュー</span><span class="t" style="left:747.90px;top:69.4px;font-size:9.2px;line-height:12px;color:#b3b3b3;transform:scaleX(0.8996);">定義</span><span class="t" style="left:764.10px;top:69.4px;font-size:9.2px;line-height:12px;color:#b3b3b3;transform:scaleX(0.7001);">にする</span></span>
<span class="g"><span class="t" style="left:796.00px;top:59.8px;font-size:9.2px;line-height:12px;color:#a6a6a6;transform:scaleX(0.6778);">タイトル</span></span>
<span class="g"><span class="t" style="left:796.60px;top:69.4px;font-size:9.2px;line-height:12px;color:#a6a6a6;transform:scaleX(0.7787);">を</span><span class="t" style="left:803.61px;top:69.4px;font-size:9.2px;line-height:12px;color:#a6a6a6;transform:scaleX(0.8996);">表示</span></span>
<span class="g"><span class="t" style="left:830.00px;top:59.8px;font-size:9.2px;line-height:12px;color:#262626;transform:scaleX(0.7156);">タイトルの</span></span>
<span class="g"><span class="t" style="left:826.00px;top:69.4px;font-size:9.2px;line-height:12px;color:#262626;transform:scaleX(0.9389);">表示方向</span></span>
<span class="g"><span class="t" style="left:818.50px;top:86.2px;font-size:9.2px;line-height:12px;color:#444;transform:scaleX(0.7083);">タイトル</span></span>
<span class="g"><span class="t" style="left:880.00px;top:59.8px;font-size:9.2px;line-height:12px;color:#262626;transform:scaleX(0.6667);">プロファイル</span></span>
<span class="g"><span class="t" style="left:882.80px;top:69.4px;font-size:9.2px;line-height:12px;color:#262626;transform:scaleX(0.6978);">ナビゲータ</span></span>
<span class="g"><span class="t" style="left:923.00px;top:59.8px;font-size:9.2px;line-height:12px;color:#262626;transform:scaleX(0.7037);">インスペクタ</span></span>
<span class="g"><span class="t" style="left:913.00px;top:86.2px;font-size:9.2px;line-height:12px;color:#444;transform:scaleX(0.8889);">表示</span></span>
<span class="g"><span class="t" style="left:33.00px;top:127.1px;font-size:9.6px;line-height:12px;color:#262626;transform:scaleX(0.6980);">プロファイル</span><span class="t" style="left:74.88px;top:127.1px;font-size:9.6px;line-height:12px;color:#262626;transform:scaleX(0.9600);">定義</span><span class="t" style="left:94.08px;top:127.1px;font-size:9.6px;line-height:12px;color:#262626;transform:scaleX(0.6980);">サンプル</span></span>
<span class="g"><span class="t" style="left:42.50px;top:143.1px;font-size:9.6px;line-height:12px;color:#262626;transform:scaleX(0.9600);">要求</span><span class="t" style="left:61.70px;top:143.1px;font-size:9.6px;line-height:12px;color:#262626;transform:scaleX(0.7500);">モデル</span></span>
<span class="g"><span class="t" style="left:42.50px;top:159.1px;font-size:9.6px;line-height:12px;color:#262626;transform:scaleX(0.9600);">設計</span><span class="t" style="left:61.70px;top:159.1px;font-size:9.6px;line-height:12px;color:#262626;transform:scaleX(0.7500);">モデル</span></span>
<span class="g"><span class="t" style="left:52.50px;top:175.1px;font-size:10.08px;line-height:12px;color:#262626;transform:scaleX(0.8223);">ACC</span></span>
<span class="g"><span class="t" style="left:70.30px;top:175.1px;font-size:9.6px;line-height:12px;color:#262626;transform:scaleX(0.7550);">コンポーネント</span><span class="t" style="left:123.15px;top:175.1px;font-size:9.6px;line-height:12px;color:#262626;transform:scaleX(0.9600);">構造</span><span class="t" style="left:142.35px;top:175.1px;font-size:9.6px;line-height:12px;color:#262626;transform:scaleX(0.7550);">モデル</span></span>
<span class="g"><span class="t" style="left:62.00px;top:191.1px;font-size:10.08px;line-height:12px;color:#262626;transform:scaleX(0.8176);">ACC</span></span>
<span class="g"><span class="t" style="left:79.80px;top:191.1px;font-size:9.6px;line-height:12px;color:#262626;transform:scaleX(0.7150);">インターフェース</span></span>
<span class="g"><span class="t" style="left:62.00px;top:207.1px;font-size:9.6px;line-height:12px;color:#262626;transform:scaleX(0.7083);">エンジン</span><span class="t" style="left:90.33px;top:207.1px;font-size:9.6px;line-height:12px;color:#262626;transform:scaleX(0.9600);">制御</span><span class="t" style="left:109.53px;top:207.1px;font-size:9.6px;line-height:12px;color:#262626;transform:scaleX(0.7083);">インターフェース</span></span>
<span class="g"><span class="t" style="left:62.00px;top:223.1px;font-size:9.6px;line-height:12px;color:#262626;transform:scaleX(0.7150);">ブレーキ</span><span class="t" style="left:90.60px;top:223.1px;font-size:9.6px;line-height:12px;color:#262626;transform:scaleX(0.9600);">制御</span><span class="t" style="left:109.80px;top:223.1px;font-size:9.6px;line-height:12px;color:#262626;transform:scaleX(0.7150);">インターフェース</span></span>
<span class="g"><span class="t" style="left:62.00px;top:239.1px;font-size:10.08px;line-height:12px;color:#262626;transform:scaleX(0.8176);">ACC</span></span>
<span class="g"><span class="t" style="left:79.80px;top:239.1px;font-size:9.6px;line-height:12px;color:#262626;transform:scaleX(0.7529);">コンポーネント</span></span>
<span class="g"><span class="t" style="left:62.00px;top:255.1px;font-size:9.6px;line-height:12px;color:#262626;transform:scaleX(0.7273);">エンジン</span><span class="t" style="left:91.09px;top:255.1px;font-size:9.6px;line-height:12px;color:#262626;transform:scaleX(0.9600);">制御</span><span class="t" style="left:110.29px;top:255.1px;font-size:9.6px;line-height:12px;color:#262626;transform:scaleX(0.7273);">コンポーネント</span></span>
<span class="g"><span class="t" style="left:62.00px;top:271.1px;font-size:9.6px;line-height:12px;color:#262626;transform:scaleX(0.7291);">ブレーキ</span><span class="t" style="left:91.16px;top:271.1px;font-size:9.6px;line-height:12px;color:#262626;transform:scaleX(0.9600);">制御</span><span class="t" style="left:110.36px;top:271.1px;font-size:9.6px;line-height:12px;color:#262626;transform:scaleX(0.7291);">コンポーネント</span></span>
<span class="g"><span class="t" style="left:29.30px;top:326.0px;font-size:9.6px;line-height:12px;color:#b4b4b4;transform:scaleX(0.7580);">キーワード</span></span>
<span class="g"><span class="t" style="left:13.00px;top:372.2px;font-size:9.6px;line-height:12px;color:#262626;transform:scaleX(0.9600);">新規</span></span>
<span class="g"><span class="t" style="left:48.00px;top:372.2px;font-size:9.6px;line-height:12px;color:#262626;transform:scaleX(0.9500);">参照</span></span>
<span class="g"><span class="t" style="left:84.00px;top:372.2px;font-size:9.6px;line-height:12px;color:#262626;transform:scaleX(0.9100);">入力</span></span>
<span class="g"><span class="t" style="left:56.00px;top:485.8px;font-size:9.6px;line-height:12px;color:#8c8c8c;transform:scaleX(0.9600);">追加</span><span class="t" style="left:75.20px;top:485.8px;font-size:9.6px;line-height:12px;color:#8c8c8c;transform:scaleX(0.7200);">できる</span><span class="t" style="left:96.80px;top:485.8px;font-size:9.6px;line-height:12px;color:#8c8c8c;transform:scaleX(0.9600);">要素</span><span class="t" style="left:116.00px;top:485.8px;font-size:9.6px;line-height:12px;color:#8c8c8c;transform:scaleX(0.7200);">がありません。</span></span>
<span class="g"><span class="t" style="left:318.40px;top:110.6px;font-size:9.6px;line-height:12px;color:#262626;transform:scaleX(0.7110);">プロファイル</span><span class="t" style="left:361.06px;top:110.6px;font-size:9.6px;line-height:12px;color:#262626;transform:scaleX(0.9600);">定義</span><span class="t" style="left:380.26px;top:110.6px;font-size:9.6px;line-height:12px;color:#262626;transform:scaleX(0.7110);">サンプル</span></span>
<span class="g"><span class="t" style="left:423.00px;top:110.6px;font-size:9.6px;line-height:12px;color:#262626;transform:scaleX(0.9600);">設計</span><span class="t" style="left:442.20px;top:110.6px;font-size:9.6px;line-height:12px;color:#262626;transform:scaleX(0.7267);">モデル</span></span>
<span class="g"><span class="t" style="left:478.40px;top:110.6px;font-size:10.08px;line-height:12px;color:#262626;transform:scaleX(0.9022);">ACC</span></span>
<span class="g"><span class="t" style="left:498.00px;top:110.6px;font-size:9.6px;line-height:12px;color:#262626;transform:scaleX(0.7380);">コンポーネント</span><span class="t" style="left:549.66px;top:110.6px;font-size:9.6px;line-height:12px;color:#262626;transform:scaleX(0.9600);">構造</span><span class="t" style="left:568.86px;top:110.6px;font-size:9.6px;line-height:12px;color:#262626;transform:scaleX(0.7380);">モデル</span></span>
<span class="g"><span class="t" style="left:260.70px;top:135.2px;font-size:12.8px;line-height:16px;color:#4a7fba;transform:scaleX(0.8308);">コンポーネント</span><span class="t" style="left:336.30px;top:135.2px;font-size:12.8px;line-height:16px;color:#4a7fba;transform:scaleX(0.9846);">構造</span><span class="t" style="left:361.90px;top:135.2px;font-size:12.8px;line-height:16px;color:#4a7fba;transform:scaleX(0.8308);">モデル</span></span>
<span class="g"><span class="t" style="left:398.60px;top:135.2px;font-size:13.44px;line-height:16px;color:#2a2a2a;transform:scaleX(0.7965);">ACC</span></span>
<span class="g"><span class="t" style="left:421.80px;top:135.2px;font-size:12.8px;line-height:16px;color:#2a2a2a;transform:scaleX(0.8223);">コンポーネント</span><span class="t" style="left:496.63px;top:135.2px;font-size:12.8px;line-height:16px;color:#2a2a2a;transform:scaleX(0.9846);">構造</span><span class="t" style="left:522.23px;top:135.2px;font-size:12.8px;line-height:16px;color:#2a2a2a;transform:scaleX(0.8223);">モデル</span></span>
<span class="g"><span class="t" style="left:260.60px;top:168.6px;font-size:9.6px;line-height:12px;color:#3c6ea8;transform:scaleX(0.9100);">説明</span></span>
<span class="g"><span class="t" style="left:268.70px;top:195.3px;font-size:9.6px;line-height:12px;color:#262626;transform:scaleX(0.7168);">エンジンとブレーキを</span><span class="t" style="left:340.38px;top:195.3px;font-size:9.6px;line-height:12px;color:#262626;transform:scaleX(0.9600);">統合制御</span><span class="t" style="left:378.78px;top:195.3px;font-size:9.6px;line-height:12px;color:#262626;transform:scaleX(0.7168);">してアダプティブ</span><span class="t" style="left:433.33px;top:195.3px;font-size:9.6px;line-height:12px;color:#262626;">・</span><span class="t" style="left:440.54px;top:195.3px;font-size:9.6px;line-height:12px;color:#262626;transform:scaleX(0.7168);">クルーズ</span><span class="t" style="left:466.41px;top:195.3px;font-size:9.6px;line-height:12px;color:#262626;">・</span><span class="t" style="left:473.62px;top:195.3px;font-size:9.6px;line-height:12px;color:#262626;transform:scaleX(0.7168);">コントロールを</span><span class="t" style="left:523.80px;top:195.3px;font-size:9.6px;line-height:12px;color:#262626;transform:scaleX(0.9600);">実現</span><span class="t" style="left:543.00px;top:195.3px;font-size:9.6px;line-height:12px;color:#262626;transform:scaleX(0.7168);">する。</span></span>
<span class="g"><span class="t" style="left:261.30px;top:222.6px;font-size:9.6px;line-height:12px;color:#3c6ea8;transform:scaleX(0.9225);">設計方針</span></span>
<span class="g"><span class="t" style="left:268.00px;top:248.2px;font-size:9.6px;line-height:12px;color:#262626;transform:scaleX(0.9600);">以下</span><span class="t" style="left:287.20px;top:248.2px;font-size:9.6px;line-height:12px;color:#262626;transform:scaleX(0.6600);">の</span><span class="t" style="left:293.80px;top:248.2px;font-size:9.6px;line-height:12px;color:#262626;transform:scaleX(0.9600);">方針</span><span class="t" style="left:313.00px;top:248.2px;font-size:9.6px;line-height:12px;color:#262626;transform:scaleX(0.6600);">で、</span><span class="t" style="left:326.20px;top:248.2px;font-size:9.6px;line-height:12px;color:#262626;transform:scaleX(0.9600);">機能</span><span class="t" style="left:345.40px;top:248.2px;font-size:9.6px;line-height:12px;color:#262626;transform:scaleX(0.6600);">ブロックの</span><span class="t" style="left:378.40px;top:248.2px;font-size:9.6px;line-height:12px;color:#262626;transform:scaleX(0.9600);">分割</span><span class="t" style="left:397.60px;top:248.2px;font-size:9.6px;line-height:12px;color:#262626;transform:scaleX(0.6600);">を</span><span class="t" style="left:404.20px;top:248.2px;font-size:9.6px;line-height:12px;color:#262626;transform:scaleX(0.9600);">行</span><span class="t" style="left:413.80px;top:248.2px;font-size:9.6px;line-height:12px;color:#262626;transform:scaleX(0.6600);">う。</span></span>
<span class="g"><span class="t" style="left:265.21px;top:260.4px;font-size:9.6px;line-height:12px;color:#262626;">・</span><span class="t" style="left:272.42px;top:260.4px;font-size:9.6px;line-height:12px;color:#262626;transform:scaleX(0.7022);">ドライバ、</span><span class="t" style="left:307.52px;top:260.4px;font-size:9.6px;line-height:12px;color:#262626;transform:scaleX(0.9600);">車両</span><span class="t" style="left:326.72px;top:260.4px;font-size:9.6px;line-height:12px;color:#262626;transform:scaleX(0.7022);">からの</span><span class="t" style="left:347.79px;top:260.4px;font-size:9.6px;line-height:12px;color:#262626;transform:scaleX(0.9600);">入力</span><span class="t" style="left:366.99px;top:260.4px;font-size:9.6px;line-height:12px;color:#262626;transform:scaleX(0.7022);">を</span><span class="t" style="left:374.01px;top:260.4px;font-size:9.6px;line-height:12px;color:#262626;transform:scaleX(0.9600);">種別毎</span><span class="t" style="left:402.81px;top:260.4px;font-size:9.6px;line-height:12px;color:#262626;transform:scaleX(0.7022);">に</span><span class="t" style="left:409.83px;top:260.4px;font-size:9.6px;line-height:12px;color:#262626;transform:scaleX(0.9600);">機能</span><span class="t" style="left:429.03px;top:260.4px;font-size:9.6px;line-height:12px;color:#262626;transform:scaleX(0.7022);">ブロックで</span><span class="t" style="left:464.14px;top:260.4px;font-size:9.6px;line-height:12px;color:#262626;transform:scaleX(0.9600);">段階的</span><span class="t" style="left:492.94px;top:260.4px;font-size:9.6px;line-height:12px;color:#262626;transform:scaleX(0.7022);">に</span><span class="t" style="left:499.96px;top:260.4px;font-size:9.6px;line-height:12px;color:#262626;transform:scaleX(0.9600);">抽象化</span><span class="t" style="left:528.76px;top:260.4px;font-size:9.6px;line-height:12px;color:#262626;transform:scaleX(0.7022);">し、サービスのコアとなる</span><span class="t" style="left:613.03px;top:260.4px;font-size:9.6px;line-height:12px;color:#262626;transform:scaleX(0.9600);">機能</span><span class="t" style="left:632.23px;top:260.4px;font-size:9.6px;line-height:12px;color:#262626;transform:scaleX(0.7022);">ブロックに</span><span class="t" style="left:667.33px;top:260.4px;font-size:9.6px;line-height:12px;color:#262626;transform:scaleX(0.9600);">提供</span><span class="t" style="left:686.53px;top:260.4px;font-size:9.6px;line-height:12px;color:#262626;transform:scaleX(0.7022);">する。</span></span>
<span class="g"><span class="t" style="left:265.21px;top:273.0px;font-size:9.6px;line-height:12px;color:#262626;">・</span><span class="t" style="left:272.42px;top:273.0px;font-size:9.6px;line-height:12px;color:#262626;transform:scaleX(0.7241);">サービスからの</span><span class="t" style="left:323.10px;top:273.0px;font-size:9.6px;line-height:12px;color:#262626;transform:scaleX(0.9600);">出力</span><span class="t" style="left:342.30px;top:273.0px;font-size:9.6px;line-height:12px;color:#262626;transform:scaleX(0.7241);">は、</span><span class="t" style="left:356.79px;top:273.0px;font-size:9.6px;line-height:12px;color:#262626;transform:scaleX(0.9600);">種別</span><span class="t" style="left:375.99px;top:273.0px;font-size:9.6px;line-height:12px;color:#262626;transform:scaleX(0.7241);">に</span><span class="t" style="left:383.23px;top:273.0px;font-size:9.6px;line-height:12px;color:#262626;transform:scaleX(0.9600);">応</span><span class="t" style="left:392.83px;top:273.0px;font-size:9.6px;line-height:12px;color:#262626;transform:scaleX(0.7241);">じて</span><span class="t" style="left:407.31px;top:273.0px;font-size:9.6px;line-height:12px;color:#262626;transform:scaleX(0.9600);">段階的</span><span class="t" style="left:436.11px;top:273.0px;font-size:9.6px;line-height:12px;color:#262626;transform:scaleX(0.7241);">に</span><span class="t" style="left:443.35px;top:273.0px;font-size:9.6px;line-height:12px;color:#262626;transform:scaleX(0.9600);">具象化</span><span class="t" style="left:472.15px;top:273.0px;font-size:9.6px;line-height:12px;color:#262626;transform:scaleX(0.7241);">して</span><span class="t" style="left:486.63px;top:273.0px;font-size:9.6px;line-height:12px;color:#262626;transform:scaleX(0.9600);">外部</span><span class="t" style="left:505.83px;top:273.0px;font-size:9.6px;line-height:12px;color:#262626;transform:scaleX(0.7241);">へ</span><span class="t" style="left:513.08px;top:273.0px;font-size:9.6px;line-height:12px;color:#262626;transform:scaleX(0.9600);">出力</span><span class="t" style="left:532.28px;top:273.0px;font-size:9.6px;line-height:12px;color:#262626;transform:scaleX(0.7241);">する。</span></span>
<span class="g"><span class="t" style="left:826.00px;top:110.6px;font-size:9.6px;line-height:12px;color:#3c6ea8;transform:scaleX(0.7414);">コンポーネント</span><span class="t" style="left:877.90px;top:110.6px;font-size:9.6px;line-height:12px;color:#3c6ea8;transform:scaleX(0.9600);">図</span></span>
<span class="g"><span class="t" style="left:903.70px;top:110.6px;font-size:9.6px;line-height:12px;color:#3c6ea8;transform:scaleX(0.9250);">詳細</span></span>
<span class="g"><span class="t" style="left:939.00px;top:110.6px;font-size:9.6px;line-height:12px;color:#ffffff;transform:scaleX(0.6950);">ドキュメントフォーム</span></span>
<span class="g"><span class="t" style="left:233.80px;top:110.6px;font-size:10.71px;line-height:12px;color:#ffffff;transform:scaleX(0.8743);">M</span></span>
<span class="g"><span class="t" style="left:828.00px;top:599.0px;font-size:10.92px;line-height:12px;color:#6a6a6a;transform:scaleX(0.9604);">100%</span></span>
</body></html>
